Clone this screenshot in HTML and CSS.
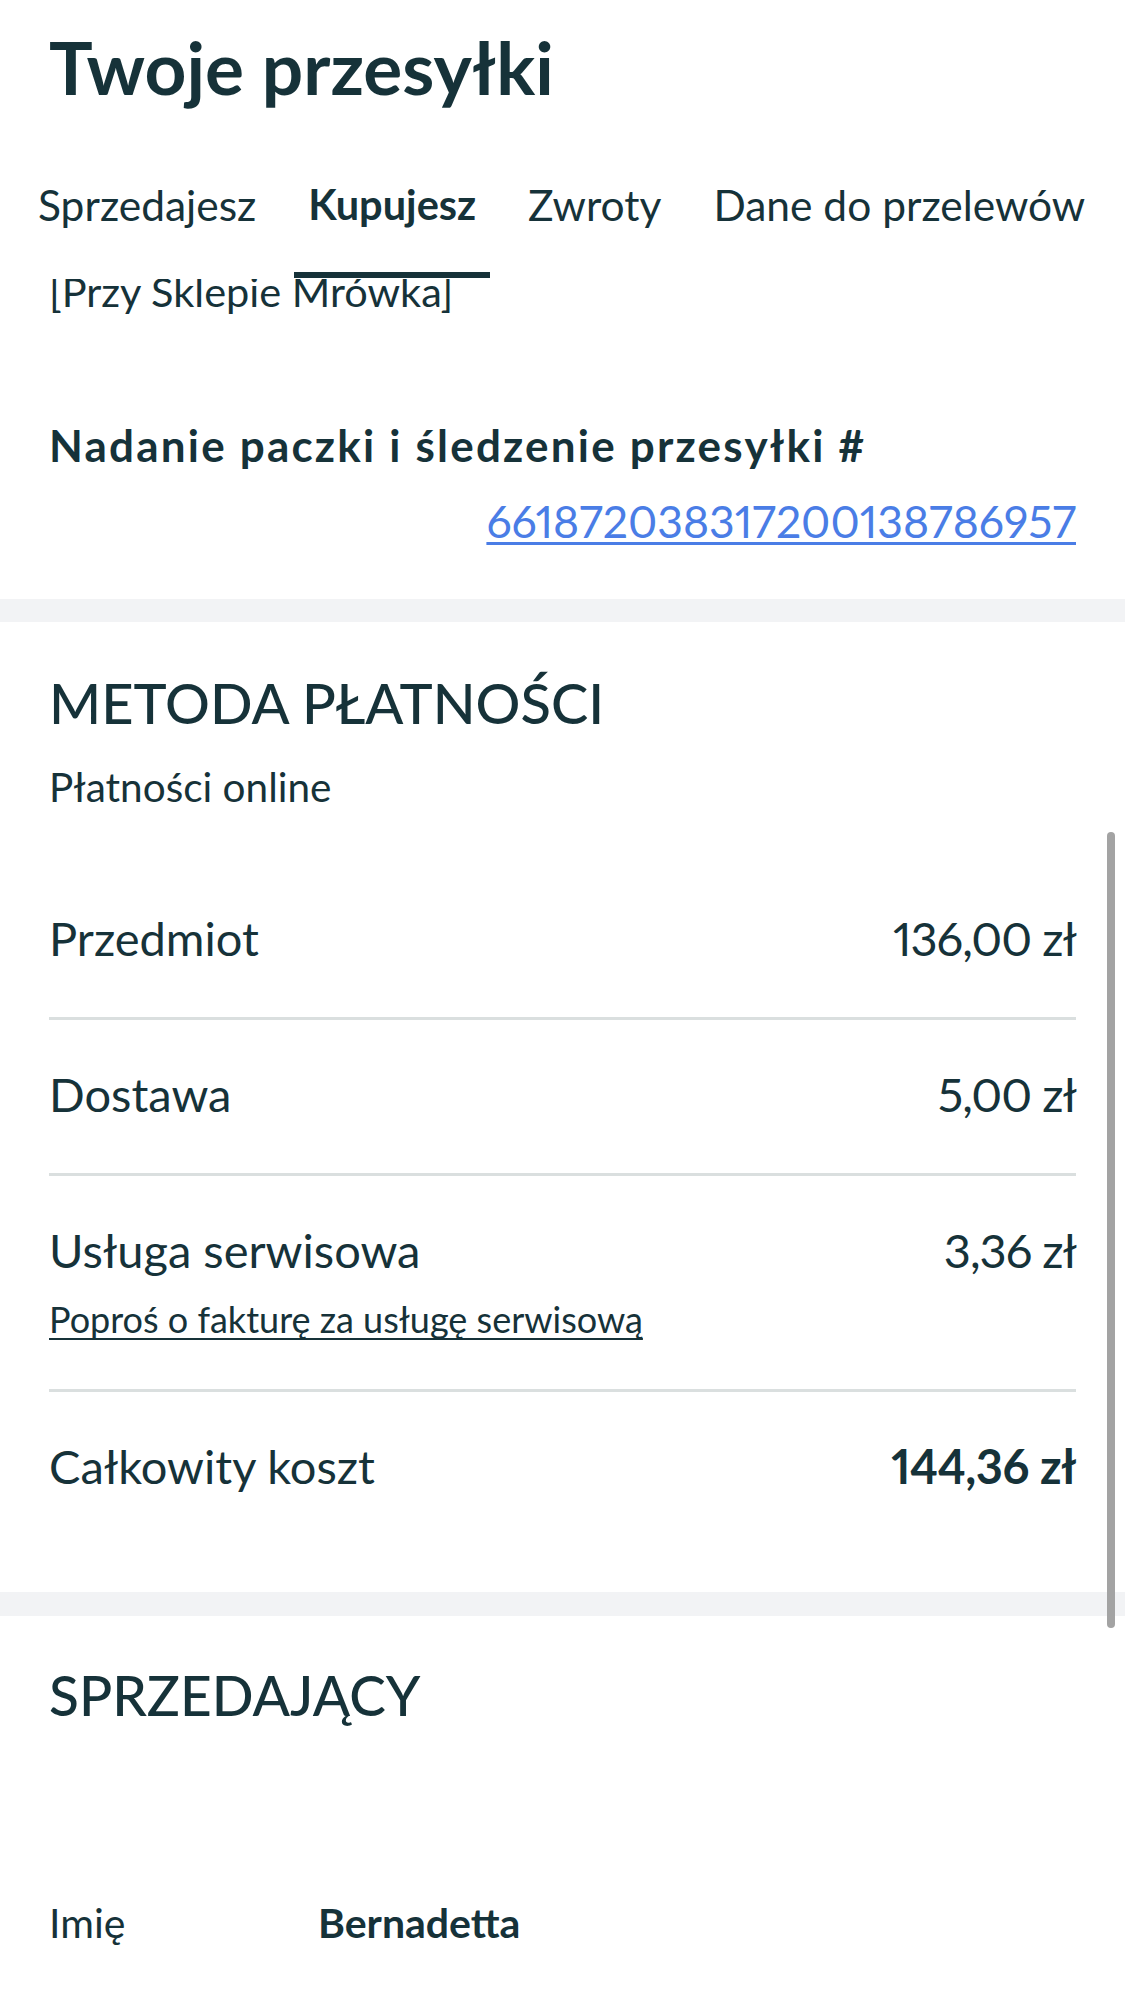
FILE: index.html
```html
<!DOCTYPE html>
<html lang="pl">
<head>
<meta charset="utf-8">
<title>Twoje przesyłki</title>
<link rel="stylesheet" href="styles.css">
</head>
<body>
<div class="page">
  <header class="header">
    <h1 class="title">Twoje przesyłki</h1>
    <nav class="tabs">
      <span class="tab">Sprzedajesz</span>
      <span class="tab tab-active">Kupujesz</span>
      <span class="tab">Zwroty</span>
      <span class="tab">Dane do przelewów</span>
    </nav>
  </header>

  <section class="card card-first">
    <div class="clip-line"><span class="address">[Przy Sklepie Mrówka]</span></div>
    <div class="tracking-label">Nadanie paczki i śledzenie przesyłki #</div>
    <div class="tracking-row"><a class="tracking-link" href="#">661872038317200138786957</a></div>
  </section>

  <section class="card card-payment">
    <h2 class="section-title">METODA PŁATNOŚCI</h2>
    <div class="payment-method">Płatności online</div>
    <div class="rows">
      <div class="row">
        <div class="row-main"><span>Przedmiot</span><span class="amount">136,00 zł</span></div>
      </div>
      <div class="row">
        <div class="row-main"><span>Dostawa</span><span class="amount">5,00 zł</span></div>
      </div>
      <div class="row">
        <div class="row-main"><span>Usługa serwisowa</span><span class="amount">3,36 zł</span></div>
        <a class="invoice-link" href="#">Poproś o fakturę za usługę serwisową</a>
      </div>
      <div class="row row-total">
        <div class="row-main"><span>Całkowity koszt</span><span class="amount total">144,36 zł</span></div>
      </div>
    </div>
  </section>

  <section class="card card-seller">
    <h2 class="section-title">SPRZEDAJĄCY</h2>
    <div class="info-row">
      <span class="info-label">Imię</span>
      <span class="info-value">Bernadetta</span>
    </div>
  </section>

  <div class="scrollbar"></div>
</div>
</body>
</html>
```

FILE: styles.css
```css
html, body {
  margin: 0;
  padding: 0;
}
body {
  background: #f2f3f5;
  font-family: Lato, "Open Sans", sans-serif;
  color: #163239;
}
.page {
  position: relative;
  width: 1125px;
  height: 2004px;
  overflow: hidden;
}
.header {
  background: #ffffff;
  height: 279px;
  box-sizing: border-box;
  padding-top: 25px;
}
.title {
  margin: 0;
  padding-left: 49px;
  font-size: 73px;
  line-height: 85px;
  font-weight: 700;
}
.tabs {
  display: flex;
  gap: 24px;
  padding-left: 24px;
  margin-top: 70px;
}
.tab {
  padding: 0 14px 43px;
  font-size: 42.5px;
  line-height: 49px;
  border-bottom: 6px solid transparent;
  white-space: nowrap;
}
.tab-active {
  font-weight: 700;
  font-size: 41.5px;
  border-bottom-color: #163239;
}
.card {
  background: #ffffff;
  padding: 0 49px;
  margin-bottom: 23px;
}
.card-first {
  padding-bottom: 52px;
}
.clip-line {
  height: 35px;
  overflow: hidden;
  display: flex;
  align-items: flex-end;
}
.address {
  font-size: 41.5px;
  line-height: 45px;
  white-space: nowrap;
}
.tracking-label {
  margin-top: 106px;
  font-size: 44px;
  line-height: 50px;
  font-weight: 700;
  letter-spacing: 2.2px;
  white-space: nowrap;
}
.tracking-row {
  margin-top: 25px;
  display: flex;
  justify-content: flex-end;
}
.tracking-link {
  font-size: 44.5px;
  line-height: 52px;
  color: #4a7de6;
  font-variant-numeric: proportional-nums;
  text-decoration: underline;
  text-decoration-thickness: 3px;
  text-underline-offset: 4px;
}
.card-payment {
  padding-top: 47px;
  padding-bottom: 98px;
  margin-bottom: 24px;
}
.section-title {
  margin: 0;
  font-size: 56px;
  line-height: 68px;
  font-weight: 500;
}
.card-seller .section-title {
  font-size: 55px;
}
.payment-method {
  margin-top: 30px;
  font-size: 40.5px;
  line-height: 40px;
}
.rows {
  margin-top: 57px;
}
.row {
  padding: 47px 0 51px;
  border-bottom: 3px solid #dadfdf;
}
.row-total {
  border-bottom: none;
  padding-bottom: 0;
}
.row-main {
  display: flex;
  justify-content: space-between;
  font-size: 47px;
  line-height: 55px;
}
.amount {
  font-variant-numeric: proportional-nums;
  letter-spacing: -1px;
}
.total {
  font-weight: 700;
  letter-spacing: -0.5px;
}
.invoice-link {
  display: inline-block;
  margin-top: 22px;
  font-size: 36px;
  line-height: 38px;
  color: #163239;
  text-decoration: underline;
  text-decoration-thickness: 2px;
  text-underline-offset: 5px;
  text-decoration-skip-ink: none;
}
.card-seller {
  padding-top: 45px;
  padding-bottom: 60px;
}
.info-row {
  display: flex;
  align-items: baseline;
  margin-top: 170px;
  font-size: 41px;
  line-height: 47px;
}
.info-label {
  width: 269px;
}
.info-value {
  font-weight: 700;
}
.scrollbar {
  position: absolute;
  left: 1107px;
  top: 832px;
  width: 8px;
  height: 796px;
  border-radius: 4px;
  background: #a3a3a3;
}
```
